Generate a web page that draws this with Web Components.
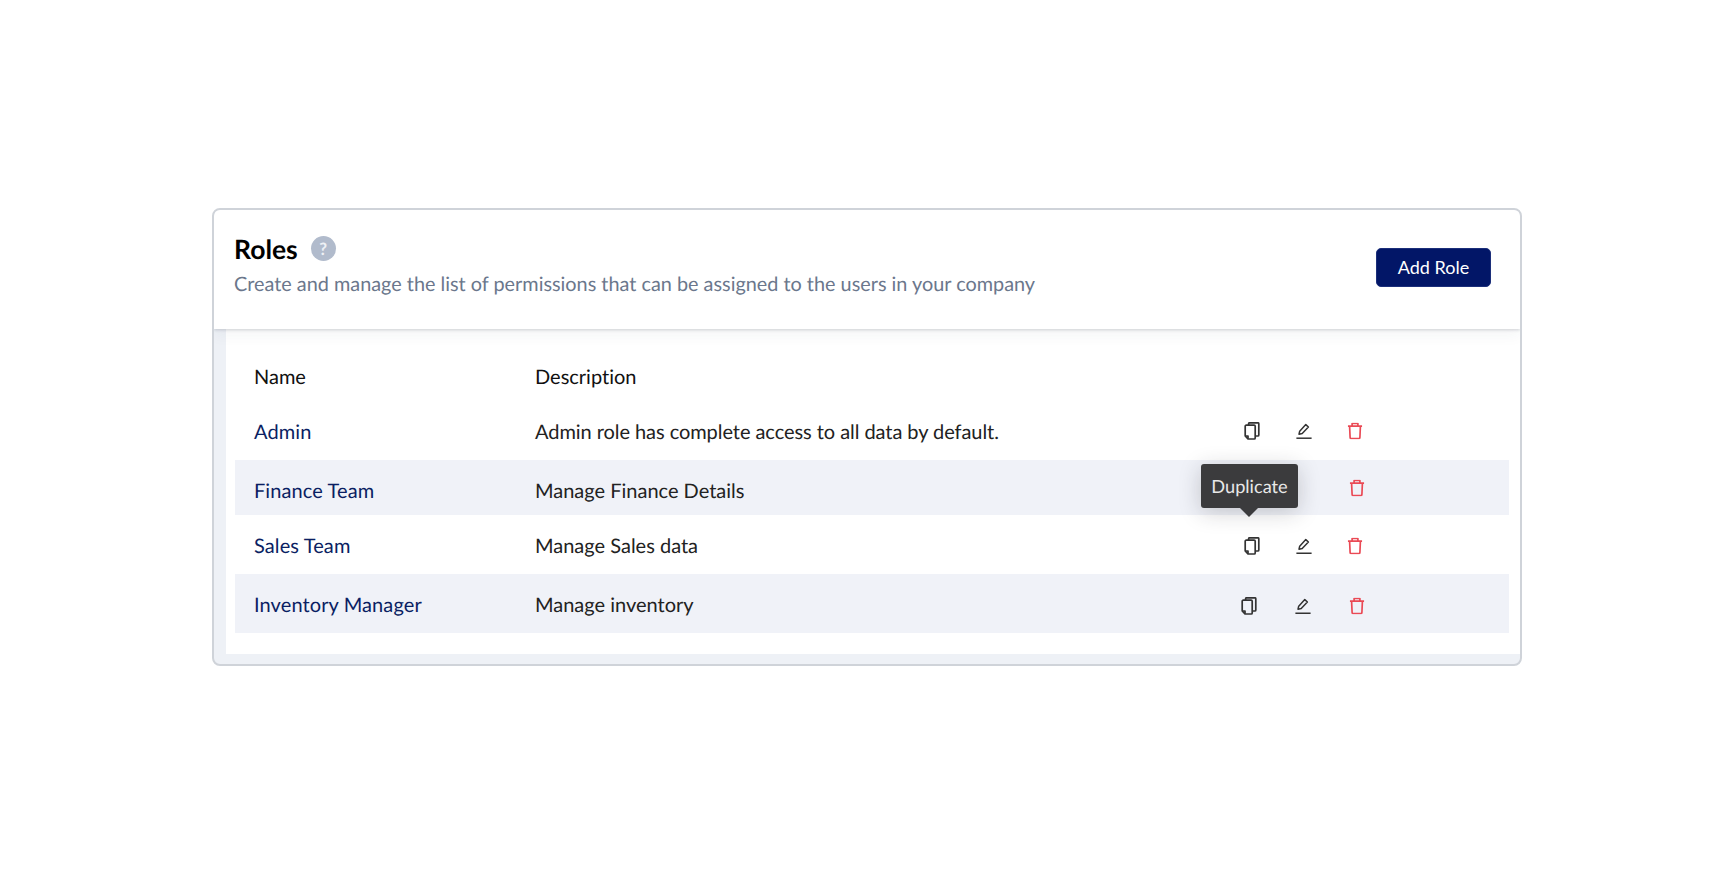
<!DOCTYPE html>
<html lang="en"><head><meta charset="utf-8"><title>Roles</title>
<style>
html,body{margin:0;background:#fff}
body{width:1734px;height:876px;overflow:hidden;font-family:Lato,"Open Sans",sans-serif;color:#1f1f1f;text-rendering:geometricPrecision}
main{padding:208px 0 0 212px}
</style></head><body>
<main>
<roles-card>
  <roles-header slot="header" title-text="Roles" sub="Create and manage the list of permissions that can be assigned to the users in your company" action="Add Role"></roles-header>
  <roles-head></roles-head>
  <role-row name="Admin" desc="Admin role has complete access to all data by default." h="58" cx="1252" px="1304" tx="1355" iy="0" ty="0.5" ls="-0.06"></role-row>
  <role-row name="Finance Team" desc="Manage Finance Details" h="55" shade tx="1357" iy="0" ty="3">
    <role-tip>Duplicate</role-tip>
  </role-row>
  <role-row name="Sales Team" desc="Manage Sales data" h="59" cx="1252" px="1304" tx="1355" iy="1" ty="1"></role-row>
  <role-row name="Inventory Manager" desc="Manage inventory" h="59" shade cx="1249" px="1303" tx="1357" iy="2" ty="1"></role-row>
</roles-card>
</main>
<script>
const ICONS={
 copy:'<svg width="16" height="18" viewBox="0 0 16 18" fill="none" stroke="#333" stroke-width="1.7" stroke-linejoin="round"><path d="M4.6 3.2H2.2a1 1 0 0 0-1 1V14l2.8 3h6.2a1 1 0 0 0 1-1V4.2a1 1 0 0 0-1-1H4.6z"/><path d="M1.4 14H4v2.8"/><path d="M4.6 3.2V1.8a1 1 0 0 1 1-1h8.2a1 1 0 0 1 1 1V13a1 1 0 0 1-1 1h-2.4"/></svg>',
 pen:'<svg width="16" height="16" viewBox="0 0 16 16" fill="none" stroke="#333" stroke-width="1.5" stroke-linejoin="round"><path d="M3 11.2l.7-3L9.8 1.6l2.6 2.4-6.2 6.5z"/><path d="M0.4 15.2h15.2"/></svg>',
 trash:'<svg width="15" height="17" viewBox="0 0 15 17" fill="none" stroke="#ea4a55" stroke-width="1.7" stroke-linejoin="round"><path d="M.4 3.7h14.2"/><path d="M4.6 3.6V1h5.8v2.6"/><path d="M2.1 3.7l.5 11.3a1 1 0 0 0 1 1h7.8a1 1 0 0 0 1-1l.5-11.3"/></svg>'
};
function def(n,html){customElements.define(n,class extends HTMLElement{connectedCallback(){if(this.shadowRoot)return;const r=this.attachShadow({mode:'open'});r.innerHTML=typeof html==='function'?html(this):html;}})}
def('roles-card',`<style>
:host{display:block;box-sizing:border-box;width:1310px;height:458px;border:2px solid #cfd3d9;border-radius:8px;background:#eef1f6;overflow:hidden;position:relative}
.top{background:#fff;box-shadow:0 1px 3px rgba(40,50,70,.2),0 6px 14px rgba(40,50,70,.05);position:relative;z-index:1}
.body{margin-left:12px;background:#fff;height:325px;padding:0 11px 0 9px;box-sizing:border-box}
</style><div class="top"><slot name="header"></slot></div><div class="body"><slot></slot></div>`);
def('roles-header',h=>`<style>
:host{display:flex;align-items:center;justify-content:space-between;height:118.5px;padding:0 29px 0 20px;font-family:Lato,sans-serif;font-variant-ligatures:none}
h1{margin:0;font-size:26.5px;font-weight:700;color:#000;line-height:30px;display:flex;align-items:center;gap:13px}
p{margin:6.5px 0 0;font-size:19.85px;line-height:26px;color:#6b778c;font-variant-ligatures:none}
.q{width:25px;height:25px;border-radius:50%;background:#b1bbcc;color:#eef1f5;font-size:17px;font-weight:700;display:inline-flex;align-items:center;justify-content:center;margin-top:-1px}
button{font:400 18px Lato,sans-serif;color:#fff;background:#021667;border:1px solid #1c2f7a;border-radius:5px;width:115px;height:39px;padding:0;margin-top:-4px}
.t{margin-top:-7.5px}
</style><div class="t"><h1>${h.getAttribute('title-text')}<span class="q">?</span></h1><p>${h.getAttribute('sub')}</p></div><button>${h.getAttribute('action')}</button>`);
def('roles-head',`<style>
:host{display:grid;grid-template-columns:281px 1fr;padding:23px 0 0 19px;align-items:center;font:20px/26px Lato,sans-serif;font-variant-ligatures:none;color:#111;box-sizing:border-box;height:73.5px}
</style><span>Name</span><span>Description</span>`);
def('role-row',h=>{
 const g=a=>h.getAttribute(a);
 const base=1235;
 const ic=(n,a)=>h.hasAttribute(a)?`<span class="i" style="left:${+g(a)-base}px">${ICONS[n]}</span>`:'';
 return `<style>
:host{display:grid;grid-template-columns:281px 1fr auto;padding-left:19px;align-items:center;font:20px/26px Lato,sans-serif;font-variant-ligatures:none;color:#222;height:${g('h')}px;background:${h.hasAttribute('shade')?'#f0f2f8':'transparent'};position:relative}
a{color:#0b1f63;text-decoration:none;letter-spacing:.1px;justify-self:start}
a,span.d{position:relative;top:${g('ty')||0}px}
span.d{letter-spacing:${g('ls')||0}px}
.acts{position:absolute;left:${base-235}px;top:0;bottom:0;width:160px}
.i{position:absolute;top:50%;display:flex;transform:translate(-50%,calc(-50% + ${g('iy')}px))}
</style><a href="#">${g('name')}</a><span class="d">${g('desc')}</span>
<div class="acts">${ic('copy','cx')}${ic('pen','px')}${ic('trash','tx')}<slot></slot></div>`});
def('role-tip',`<style>
:host{position:absolute;left:-34px;top:4px;width:97px;height:44px;background:#3b3b3d;border-radius:3px;color:#e8e8e8;font:18.2px/44px Lato,sans-serif;text-align:center;box-shadow:0 4px 22px rgba(30,30,40,.22);z-index:2}
i{position:absolute;left:39px;bottom:-9px;width:0;height:0;border:9px solid transparent;border-bottom:0;border-top-color:#3b3b3d}
</style><slot></slot><i></i>`);
</script>
</body></html>
